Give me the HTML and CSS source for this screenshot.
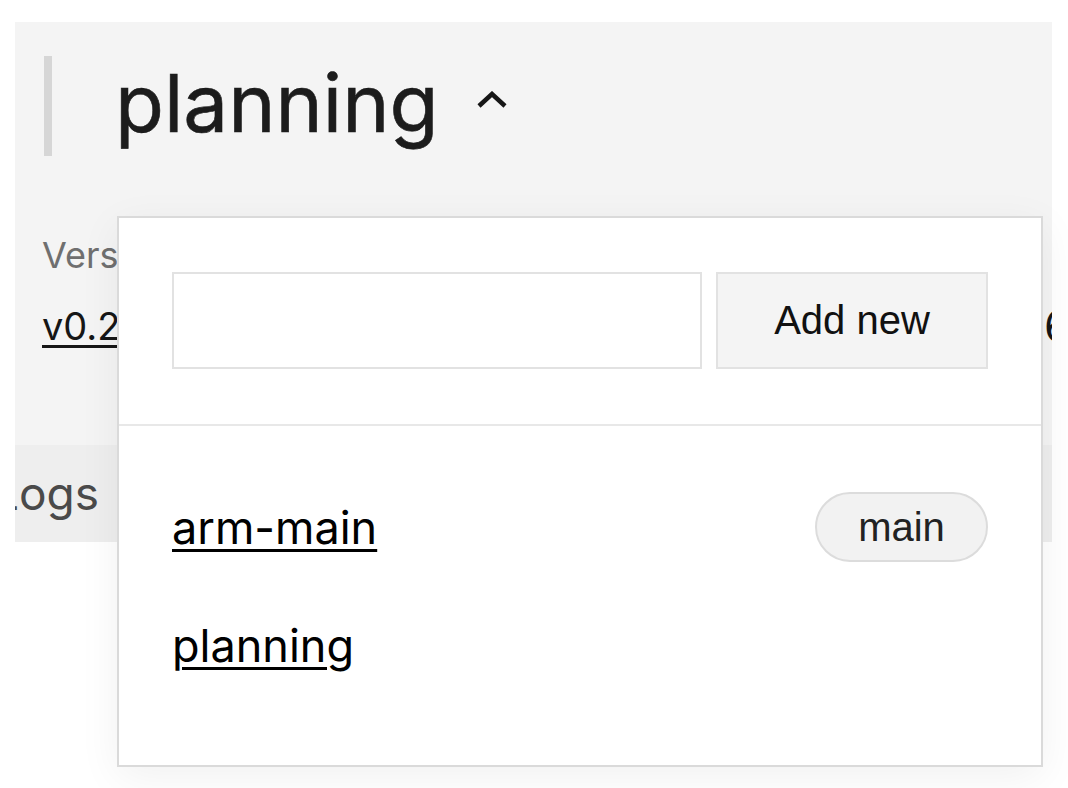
FILE: index.html
```html
<!DOCTYPE html>
<html lang="en">
<head>
  <meta charset="UTF-8">
  <meta name="viewport" content="width=device-width, initial-scale=1.0">
  <title>planning</title>
  <link rel="stylesheet" href="styles.css">
</head>
<body>
  <div class="page">
    <section class="project">
      <header class="project-head">
        <span class="head-bar"></span>
        <h1 class="project-name">planning</h1>
        <svg class="caret" width="30" height="18" viewBox="0 0 30 18">
          <polyline points="2,15 15,3 28,15" fill="none" stroke="#161616" stroke-width="4.5"/>
        </svg>
      </header>

      <div class="meta">
        <div class="meta-item">
          <div class="meta-label">Version</div>
          <a class="meta-value" href="#">v0.2.1</a>
        </div>
        <div class="meta-item">
          <div class="meta-label">&nbsp;</div>
          <span class="meta-value plain">6 days ago</span>
        </div>
      </div>

      <nav class="tabs">
        <span class="tab">Logs</span>
      </nav>
    </section>

    <!-- branch switcher, open -->
    <div class="dropdown">
      <div class="dropdown-form">
        <input type="text" class="branch-input">
        <button class="add-button">Add new</button>
      </div>
      <ul class="branch-list">
        <li class="branch-row">
          <a href="#" class="branch-link">arm-main</a>
          <span class="pill">main</span>
        </li>
        <li class="branch-row">
          <a href="#" class="branch-link">planning</a>
        </li>
      </ul>
    </div>
  </div>
</body>
</html>
```

FILE: styles.css
```css
* {
  box-sizing: border-box;
}

body {
  margin: 0;
  background: #ffffff;
  font-family: Inter, "Noto Sans", sans-serif;
  color: #161616;
}

.page {
  position: relative;
  height: 788px;
  padding: 22px 16px 0 15px;
  overflow: hidden;
}

.project {
  background: #f4f4f4;
  overflow: hidden;
  padding-top: 34px;
}

.project-head {
  display: flex;
  align-items: center;
  height: 100px;
}

.head-bar {
  width: 8px;
  height: 100px;
  margin-left: 29px;
  background: #d6d6d6;
}

.project-name {
  margin: -6px 0 0 63px;
  font-size: 80px;
  font-weight: 400;
  line-height: 1;
  color: #1c1c1c;
  -webkit-text-stroke: 0.6px #1c1c1c;
}

.caret {
  margin-left: 38px;
  margin-top: -12px;
}

.meta {
  display: grid;
  grid-template-columns: 1002px auto;
  padding-left: 27px;
  margin-top: 79px;
}

.meta-label {
  font-size: 36px;
  line-height: 40px;
  color: #6f6f6f;
}

.meta-value {
  display: block;
  margin-top: 30px;
  font-size: 38px;
  line-height: 42px;
  color: #161616;
  text-decoration: underline;
  text-decoration-thickness: 3px;
  text-underline-offset: 5px;
  white-space: nowrap;
}

.meta-value.plain {
  text-decoration: none;
  font-size: 44px;
}

.tabs {
  margin-top: 98px;
  height: 97px;
  background: #eeeeee;
}

.tab {
  display: block;
  margin-left: -22px;
  font-size: 46px;
  line-height: 97px;
  color: #4a4a4a;
}

.dropdown {
  position: absolute;
  top: 216px;
  left: 117px;
  width: 926px;
  height: 551px;
  background: #ffffff;
  border: 2px solid #dadada;
  box-shadow: 0 10px 40px rgba(0, 0, 0, 0.06);
}

.dropdown-form {
  display: flex;
  gap: 14px;
  padding: 54px 53px 55px;
  border-bottom: 2px solid #e8e8e8;
}

.branch-input {
  flex: 1;
  height: 97px;
  border: 2px solid #e2e2e2;
  background: #ffffff;
  margin: 0;
}

.add-button {
  width: 272px;
  height: 97px;
  margin: 0;
  border: 2px solid #e2e2e2;
  background: #f4f4f4;
  font-family: "Liberation Sans", Arial, sans-serif;
  font-size: 40px;
  color: #111111;
}

.branch-list {
  list-style: none;
  margin: 0;
  padding: 66px 53px 0;
  display: flex;
  flex-direction: column;
  gap: 48px;
}

.branch-row {
  display: flex;
  align-items: center;
  justify-content: space-between;
  height: 70px;
}

.branch-link {
  font-size: 45px;
  line-height: 1;
  color: #000000;
  text-decoration: underline;
  text-decoration-thickness: 3px;
  text-underline-offset: 5px;
}

.pill {
  width: 173px;
  height: 70px;
  display: flex;
  align-items: center;
  justify-content: center;
  border: 2px solid #dcdcdc;
  border-radius: 35px;
  background: #f2f2f2;
  font-family: "Liberation Sans", Arial, sans-serif;
  font-size: 40px;
  color: #222222;
}
```
